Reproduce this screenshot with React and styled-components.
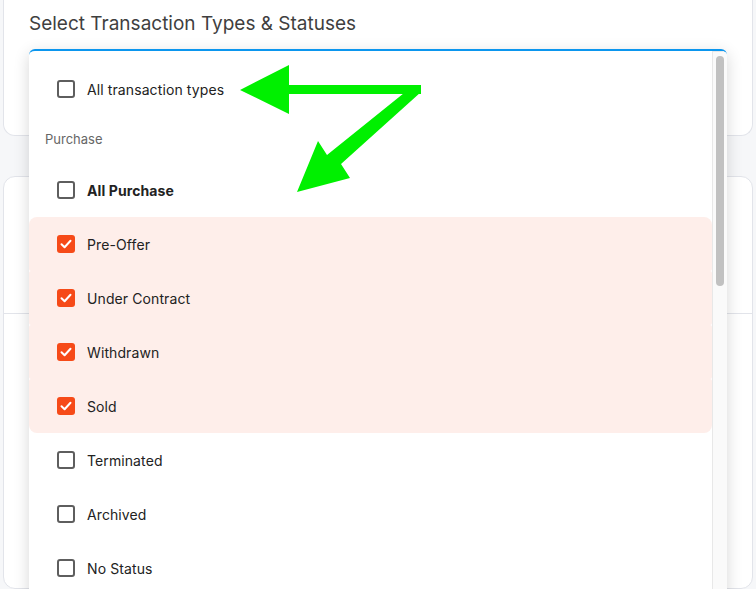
import React from 'react';
import styled, { createGlobalStyle } from 'styled-components';

const GlobalStyle = createGlobalStyle`
  html, body {
    margin: 0;
    padding: 0;
    background: #f6f7f9;
    font-family: Inter, "Noto Sans", sans-serif;
    overflow: hidden;
  }
`;

const Page = styled.div`
  position: relative;
  width: 756px;
  height: 589px;
  padding: 0 3px;
  box-sizing: border-box;
  display: flex;
  flex-direction: column;
  gap: 40px;
`;

const Card = styled.div`
  background: #fff;
  border: 1px solid #e2e4ea;
  border-radius: ${props => props.top ? '0 0 12px 12px' : '12px'};
  border-top: ${props => props.top ? 'none' : '1px solid #e2e4ea'};
  height: ${props => props.height}px;
  box-sizing: border-box;
`;

const Title = styled.div`
  padding: 11px 0 0 25px;
  font-size: 19px;
  line-height: 25px;
  color: #3f3f3f;
`;

const CardSection = styled.div`
  height: 136px;
  border-bottom: 1px solid #e2e4ea;
`;

const Dropdown = styled.div`
  position: absolute;
  top: 49px;
  left: 29px;
  width: 698px;
  height: 560px;
  background: #fff;
  border-top: 2px solid #0b96ee;
  border-radius: 6px 6px 0 0;
  box-shadow: 0 4px 16px rgba(0, 0, 0, 0.16);
  display: flex;
  overflow: hidden;
`;

const List = styled.div`
  flex: 1;
  padding-top: 11px;
  display: flex;
  flex-direction: column;
`;

const Group = styled.div`
  display: flex;
  flex-direction: column;
  border-radius: 8px;
  overflow: hidden;
`;

const Row = styled.label`
  height: 54px;
  display: flex;
  align-items: center;
  gap: 12px;
  padding-left: 28px;
  font-size: 14px;
  letter-spacing: 0.1px;
  color: #222;
  font-weight: ${props => props.bold ? 700 : 400};
  border-radius: 2px;
  background: ${props => props.selected ? '#feeeea' : 'transparent'};
`;

const GroupLabel = styled.div`
  height: 47px;
  display: flex;
  align-items: center;
  padding-left: 16px;
  padding-bottom: 1px;
  box-sizing: border-box;
  font-size: 13px;
  color: #666;
`;

const Box = styled.span`
  width: 18px;
  height: 18px;
  box-sizing: border-box;
  border-radius: 3px;
  border: ${props => props.checked ? 'none' : '2px solid #5e5e5e'};
  background: ${props => props.checked ? '#f64a18' : '#fff'};
  display: flex;
  align-items: center;
  justify-content: center;
  flex-shrink: 0;
`;

const Track = styled.div`
  width: 14px;
  border-left: 1px solid #e8e8e8;
  border-top: 1px solid #e8e8e8;
  background: #fafafa;
  display: flex;
  justify-content: center;
  padding-top: 4px;
`;

const Thumb = styled.div`
  width: 8px;
  height: 230px;
  border-radius: 4px;
  background: #c1c1c1;
`;

const Annotation = styled.svg`
  position: absolute;
  left: 0;
  top: 0;
  pointer-events: none;
`;

const Check = ({ checked }) => (
  <Box checked={checked}>
    {checked && (
      <svg width="12" height="10" viewBox="0 0 12 10">
        <path d="M1.5 5.2 L4.6 8.2 L10.5 1.8" fill="none" stroke="#fff" strokeWidth="2" strokeLinecap="round" strokeLinejoin="round" />
      </svg>
    )}
  </Box>
);

const selected = ['Pre-Offer', 'Under Contract', 'Withdrawn', 'Sold'];
const others = ['Terminated', 'Archived', 'No Status'];

export default function App() {
  return (
    <>
      <GlobalStyle />
      <Page>
        <Card top height={138}>
          <Title>Select Transaction Types &amp; Statuses</Title>
        </Card>
        <Card height={420}>
          <CardSection />
        </Card>

        <Dropdown>
          <List>
            <Row><Check />All transaction types</Row>
            <GroupLabel>Purchase</GroupLabel>
            <Row bold><Check />All Purchase</Row>
            <Group>
              {selected.map(s => (
                <Row key={s} selected><Check checked />{s}</Row>
              ))}
            </Group>
            {others.map(s => (
              <Row key={s}><Check />{s}</Row>
            ))}
          </List>
          <Track>
            <Thumb />
          </Track>
        </Dropdown>

        <Annotation width="756" height="589" viewBox="0 0 756 589">
          <polygon points="240,90 289,65 289,85 421,85 421,94 289,94 289,114" fill="#00f000" />
          <polygon points="414,85 421,92 341,164 350,178 297,192 318,141 327,155" fill="#00f000" />
        </Annotation>
      </Page>
    </>
  );
}
